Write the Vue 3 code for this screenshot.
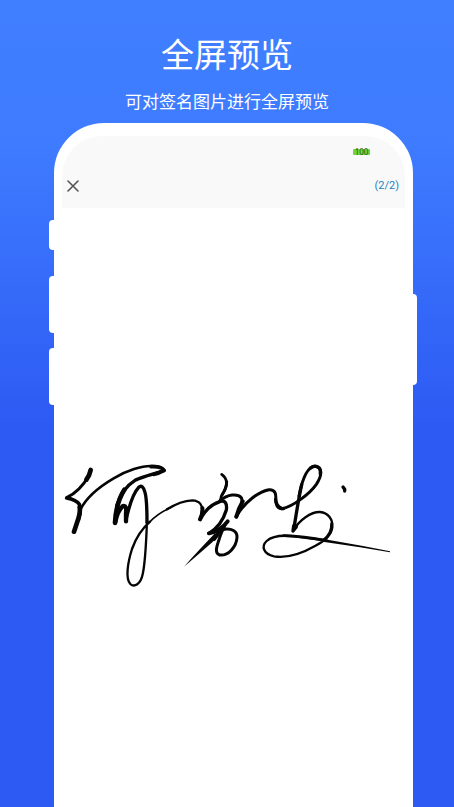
<script setup>
import { ref } from "vue";

const title = "全屏预览";
const subtitle = "可对签名图片进行全屏预览";
const battery = 100;
const total = 2;

const current = ref(2);
const isOpen = ref(true);

const closePreview = () => {
  isOpen.value = false;
};
</script>

<template>
  <div class="page">
    <header class="heading">
      <h1>{{ title }}</h1>
      <p>{{ subtitle }}</p>
    </header>
    <section class="phone">
      <i class="key volume-mute"></i>
      <i class="key volume-up"></i>
      <i class="key volume-down"></i>
      <i class="key power"></i>
      <div class="screen">
        <div class="top">
          <div class="status-bar">
            <span class="battery">{{ battery }}</span>
          </div>
          <nav class="nav-bar">
            <button
              class="close"
              type="button"
              aria-label="关闭"
              @click="closePreview"
            >
              <svg width="12" height="12" viewBox="0 0 12 12">
                <path d="M1 1L11 11M11 1L1 11" />
              </svg>
            </button>
            <span class="counter">({{ current }}/{{ total }})</span>
          </nav>
        </div>
        <div class="viewer">
          <svg v-if="isOpen" class="signature" viewBox="21 0 1029 435">
            <!-- first character -->
            <g class="pen">
              <path d="M103 72Q74 122 36 139" stroke-width="9" />
              <path d="M107 57L102 73L94 86" stroke-width="14" />
              <path d="M35 141Q64 146 73 160Q80 175 70 206" stroke-width="11" />
              <path d="M74 168Q77 186 66 215L57 242" stroke-width="14" />
              <path
                d="M74 180C92 140 135 106 176 82C215 58 262 44 290 45Q318 44 328 58"
                stroke-width="8"
              />
              <path d="M288 47Q320 45 327 58Q310 68 296 70" stroke-width="11" />
              <path
                d="M327 59C290 70 258 79 240 88C208 108 194 135 185 165"
                stroke-width="10"
              />
              <path d="M208 116Q183 155 180 216" stroke-width="14" />
              <path d="M181 213Q188 178 204 165Q216 162 213 186V211" stroke-width="13" />
              <path
                d="M213 208C222 166 235 126 251 109Q263 98 270 124C276 145 276 180 276 214"
                stroke-width="10"
              />
              <path
                d="M276 208C274 260 272 330 263 370C257 400 238 410 226 399C210 382 219 332 231 294C243 260 262 232 285 212"
                stroke-width="7"
              />
              <path d="M283 214C302 194 320 182 345 171" stroke-width="5" />
            </g>
            <!-- second character -->
            <g class="pen">
              <path
                d="M336 175C360 160 388 149 412 148C434 149 445 163 440 185"
                stroke-width="7"
              />
              <path d="M442 171Q444 187 435 205" stroke-width="12" />
              <path
                d="M436 205C450 178 474 158 496 151C510 147 517 158 514 177C505 207 487 232 462 247"
                stroke-width="10"
              />
              <path d="M500 70C519 84 517 104 506 123Q497 135 496 149" stroke-width="8" />
              <path d="M515 92Q515 110 501 132" stroke-width="9" />
              <path
                d="M495 149C518 129 548 127 559 140Q566 156 544 198"
                stroke-width="9"
              />
              <path d="M563 151L552 173L544 197" stroke-width="12" />
              <path d="M518 211Q498 238 462 247Q486 242 506 234" stroke-width="12" />
              <path
                d="M506 235C530 232 547 239 546 259C544 288 520 315 494 312C477 306 486 284 493 263Q498 246 511 220"
                stroke-width="9"
              />
              <path d="M495 239Q486 253 478 264" stroke-width="11" />
            </g>
            <path d="M480 247L492 255L466 279Q426 314 387 347Q429 300 480 247Z" />
            <!-- third character -->
            <g class="pen">
              <path
                d="M544 196C570 151 613 121 642 116C661 115 664 129 662 148C664 167 671 176 686 173"
                stroke-width="9"
              />
              <path d="M662 145Q664 167 680 172" stroke-width="10" />
              <path
                d="M680 173C715 167 765 127 784 100C804 70 801 49 780 46C757 47 742 84 732 135"
                stroke-width="9"
              />
              <path d="M767 51Q780 40 793 51Q798 59 796 69" stroke-width="10" />
              <path d="M740 101C729 151 723 195 716 236" stroke-width="10" />
              <path
                d="M714 240C732 207 769 182 795 183C820 185 834 206 832 229C829 254 807 271 780 285C738 309 695 322 657 316C625 309 618 286 635 270C655 252 696 253 724 257L804 267"
                stroke-width="7"
              />
              <path d="M716 225L714 240L724 228" stroke-width="10" />
              <path d="M830 218Q832 248 805 268" stroke-width="9" />
              <path d="M686 254Q745 255 815 269" stroke-width="8" />
              <path d="M864 108L869 115V120" stroke-width="10" />
            </g>
            <path d="M805 264L920 284L1005 301V304L915 289L803 272Z" />
          </svg>
        </div>
      </div>
    </section>
  </div>
</template>

<style>
body {
  margin: 0;
}
</style>

<style scoped>
.page {
  box-sizing: border-box;
  min-height: 100vh;
  display: flex;
  flex-direction: column;
  padding-top: 35px;
  overflow: hidden;
  background: linear-gradient(#407fff 0, #3e7bff 18%, #2d5af3 53%, #2d5af3 100%);
  font-family: "Noto Sans", "Noto Sans CJK SC", sans-serif;
}

.heading {
  color: #fff;
  text-align: center;
}

.heading h1 {
  margin: 0;
  font-size: 33px;
  line-height: 40px;
  font-weight: 400;
}

.heading p {
  margin: 15px 0 9px;
  font-size: 17px;
  line-height: 24px;
}

.phone {
  position: relative;
  flex: 1;
  display: flex;
  margin: 0 41px 0 54px;
  padding: 13px 8px 0;
  border-radius: 50px 50px 0 0;
  background: #fff;
}

.key {
  position: absolute;
  left: -5px;
  width: 10px;
  height: 57px;
  border-radius: 4px;
  background: #fff;
}

.volume-mute {
  top: 97px;
  height: 30px;
}

.volume-up {
  top: 153px;
}

.volume-down {
  top: 225px;
}

.power {
  top: 171px;
  left: auto;
  right: -4px;
  height: 91px;
}

.screen {
  flex: 1;
  display: flex;
  flex-direction: column;
}

.top {
  border-radius: 40px 40px 0 0;
  background: #f9f9f9;
}

.status-bar {
  display: flex;
  justify-content: flex-end;
  align-items: center;
  height: 32px;
  padding-right: 35px;
}

.battery {
  width: 17px;
  height: 6px;
  border-radius: 1px;
  background: #72d53c;
  color: #22631a;
  font-size: 8px;
  line-height: 6px;
  text-align: center;
}

.nav-bar {
  display: flex;
  justify-content: space-between;
  align-items: center;
  height: 35px;
  padding: 0 6px 5px 5px;
}

.close {
  display: flex;
  padding: 0;
  border: 0;
  background: none;
  cursor: pointer;
}

.close svg {
  fill: none;
  stroke: #555;
  stroke-width: 1.6;
  stroke-linecap: round;
}

.counter {
  color: #287fbd;
  font-family: Roboto, "Noto Sans CJK SC", sans-serif;
  font-size: 11px;
  line-height: 16px;
}

.viewer {
  flex: 1;
  display: flex;
  align-items: center;
  padding-top: 31px;
}

.signature {
  width: 100%;
  fill: #050505;
}

.pen {
  fill: none;
  stroke: #050505;
  stroke-linecap: round;
  stroke-linejoin: round;
}
</style>
